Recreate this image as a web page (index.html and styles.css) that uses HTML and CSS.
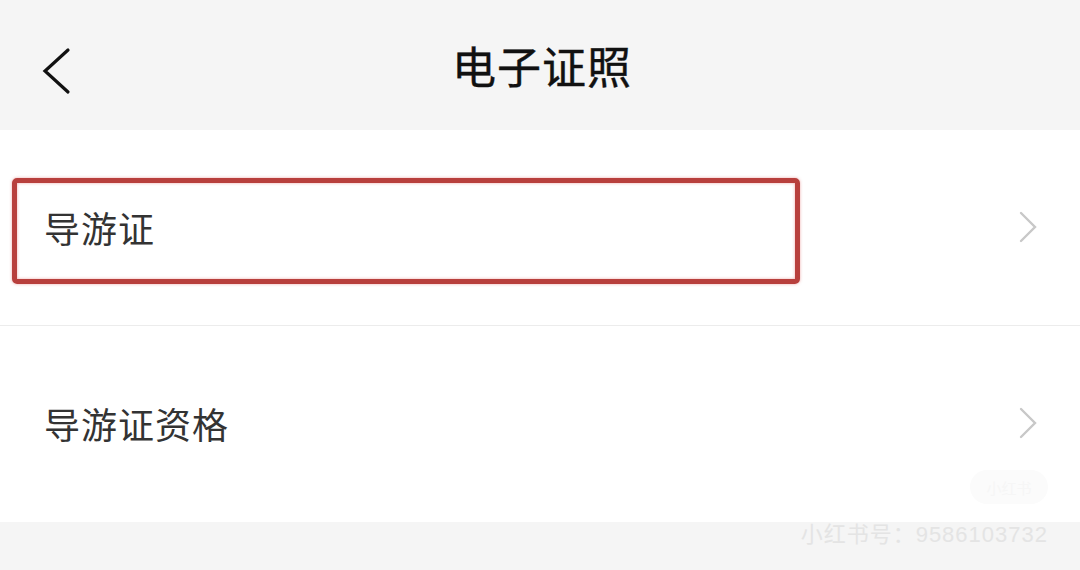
FILE: index.html
```html
<!DOCTYPE html>
<html lang="zh">
<head>
<meta charset="utf-8">
<link rel="stylesheet" href="styles.css">
</head>
<body>
<div class="page">
  <header class="nav">
    <svg class="back" width="30" height="48" viewBox="0 0 30 48"><path d="M26 3 L3 24 L26 45" fill="none" stroke="#111" stroke-width="3.2" stroke-linecap="round" stroke-linejoin="miter"/></svg>
    <h1 class="title">电子证照</h1>
  </header>
  <main class="list">
    <div class="row first">
      <span class="label">导游证</span>
      <svg class="chev" width="20" height="32" viewBox="0 0 20 32"><path d="M3 2 L17 16 L3 30" fill="none" stroke="#c8c8c8" stroke-width="2.4" stroke-linecap="round"/></svg>
      <div class="mark"></div>
    </div>
    <div class="row">
      <span class="label">导游证资格</span>
      <svg class="chev" width="20" height="32" viewBox="0 0 20 32"><path d="M3 2 L17 16 L3 30" fill="none" stroke="#c8c8c8" stroke-width="2.4" stroke-linecap="round"/></svg>
      <div class="pill">小红书</div>
    </div>
  </main>
  <footer class="foot">
    <span class="wm">小红书号：9586103732</span>
  </footer>
</div>
</body>
</html>
```
FILE: styles.css
```css
html, body {
  margin: 0;
  padding: 0;
  background: #f5f5f5;
  font-family: "Noto Sans CJK SC", "Noto Sans", sans-serif;
}
.page {
  width: 1080px;
  height: 570px;
  display: flex;
  flex-direction: column;
  overflow: hidden;
}
.nav {
  height: 130px;
  background: #f5f5f5;
  position: relative;
  display: flex;
  align-items: center;
  justify-content: center;
}
.back {
  position: absolute;
  left: 42px;
  top: 47px;
}
.title {
  margin: 0;
  font-size: 44px;
  font-weight: 400;
  color: #111;
  letter-spacing: 1px;
  margin-top: 0;
  margin-left: 4px;
  -webkit-text-stroke: 0.4px #111;
}
.list {
  background: #fff;
  display: flex;
  flex-direction: column;
}
.row {
  height: 196px;
  display: flex;
  align-items: center;
  justify-content: space-between;
  padding: 0 42px 0 44px;
  position: relative;
}
.row.first {
  border-bottom: 1px solid #ececec;
  height: 195px;
}
.label {
  font-size: 36px;
  color: #333;
  letter-spacing: 1px;
  margin-top: -2px;
}
.chev {
  margin-top: -2px;
}
.mark {
  position: absolute;
  left: 12px;
  top: 48px;
  width: 778px;
  height: 96px;
  border: 5px solid #b8403d;
  border-radius: 5px;
  box-shadow: 0 0 3px rgba(220, 80, 80, 0.5), inset 0 0 3px rgba(220, 80, 80, 0.5);
}
.pill {
  position: absolute;
  right: 32px;
  top: 144px;
  width: 78px;
  height: 34px;
  border-radius: 17px;
  background: #fbfbfb;
  color: #f6f6f6;
  font-size: 15px;
  display: flex;
  align-items: center;
  justify-content: center;
}
.foot {
  flex: 1;
  background: #f5f5f5;
  display: flex;
  justify-content: flex-end;
  padding: 0 32px 0 0;
}
.wm {
  font-family: "Liberation Sans", "Noto Sans CJK SC", sans-serif;
  font-size: 22px;
  color: #e4e4e4;
  margin-top: -6px;
  letter-spacing: 1px;
}
```
